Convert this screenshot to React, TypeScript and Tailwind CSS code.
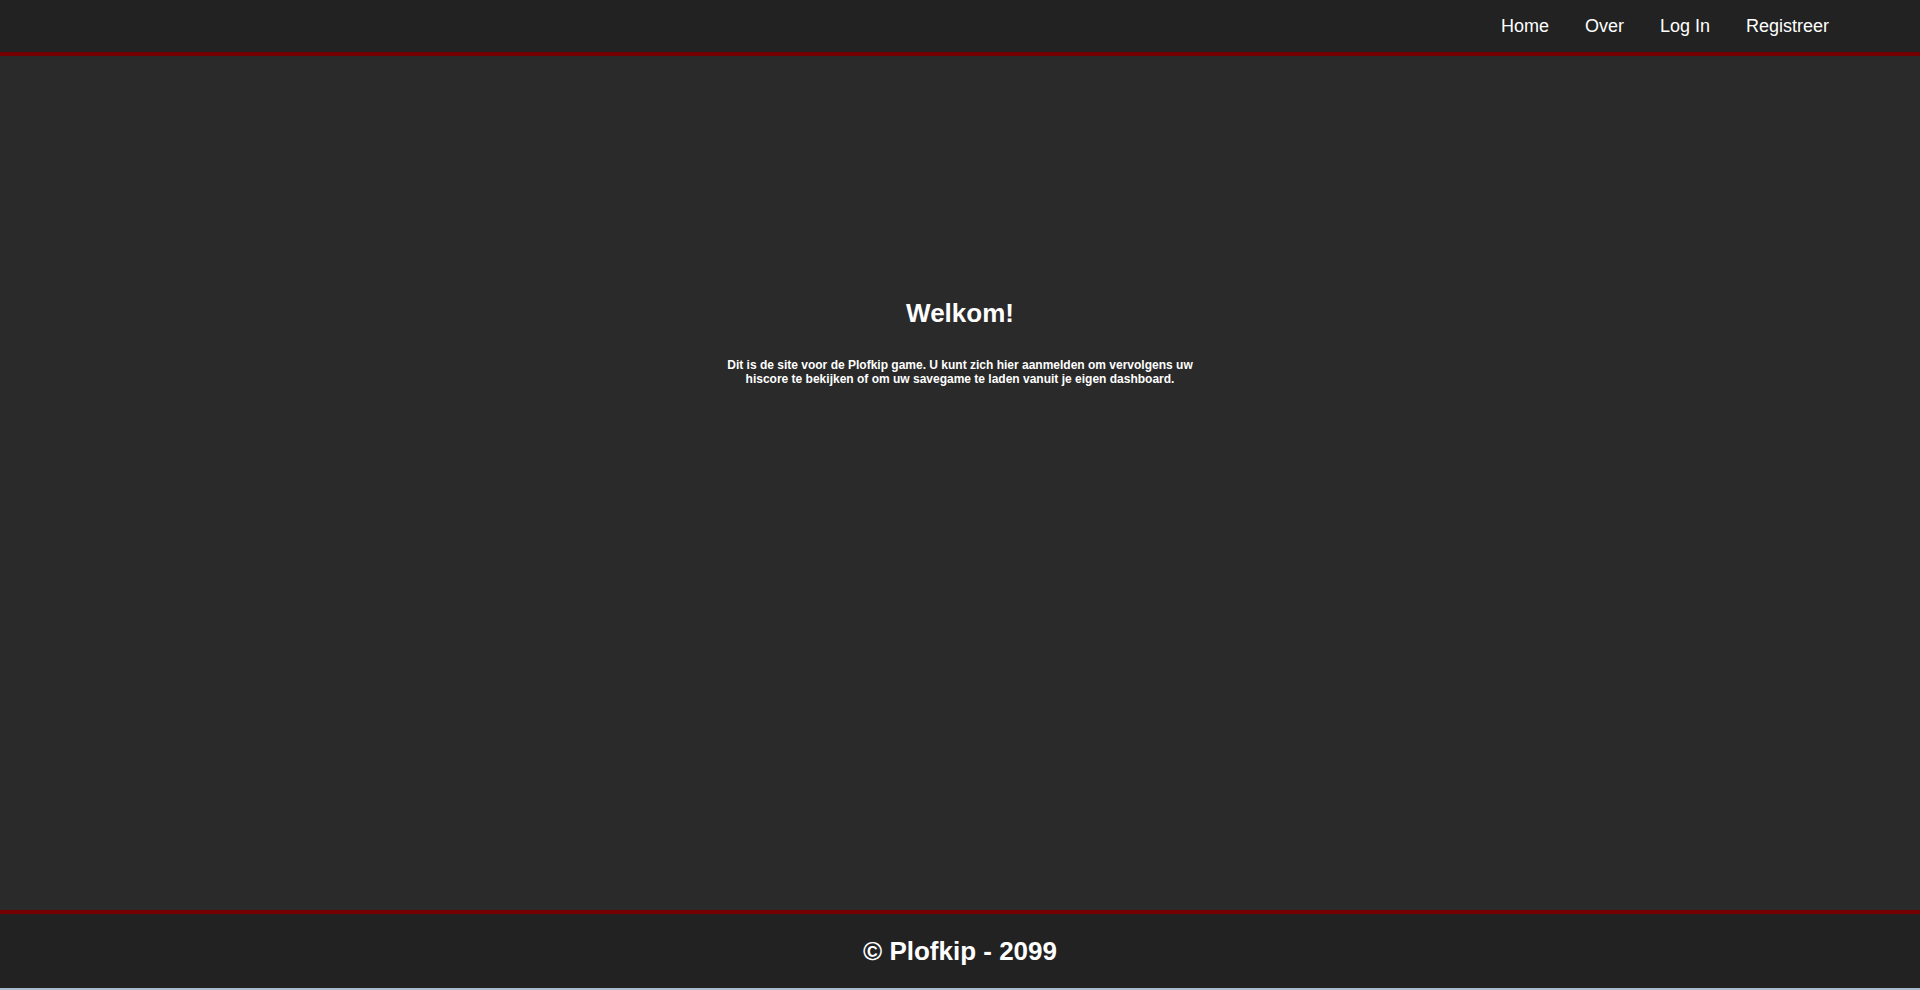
export default function App() {
  const nav = ["Home", "Over", "Log In", "Registreer"];
  return (
    <div
      className="flex h-[990px] w-full flex-col bg-[#2a2a2a] text-white"
      style={{ fontFamily: '"Liberation Sans", Arial, sans-serif' }}
    >
      <header className="flex h-[56px] shrink-0 items-center justify-end border-b-4 border-[#750000] bg-[#222222] pr-[73px]">
        <nav className="flex items-center">
          {nav.map((n) => (
            <a key={n} href="#" className="px-[18px] text-[18px] leading-[21px] text-white">
              {n}
            </a>
          ))}
        </nav>
      </header>
      <main className="flex flex-1 flex-col items-center pt-[243px]">
        <h1 className="text-[26px] font-bold leading-[29px]">Welkom!</h1>
        <p className="mt-[30px] w-[490px] text-center text-[12px] font-bold leading-[14px]">
          Dit is de site voor de Plofkip game. U kunt zich hier aanmelden om vervolgens uw hiscore te bekijken of om uw savegame te laden vanuit je eigen dashboard.
        </p>
      </main>
      <footer className="flex h-[80px] shrink-0 flex-col border-t-4 border-[#750000] bg-[#222222]">
        <div className="flex flex-1 items-center justify-center text-[26px] font-bold leading-[30px]">
          © Plofkip - 2099
        </div>
        <div className="h-[2px] bg-[#a9bccb]" />
      </footer>
    </div>
  );
}
